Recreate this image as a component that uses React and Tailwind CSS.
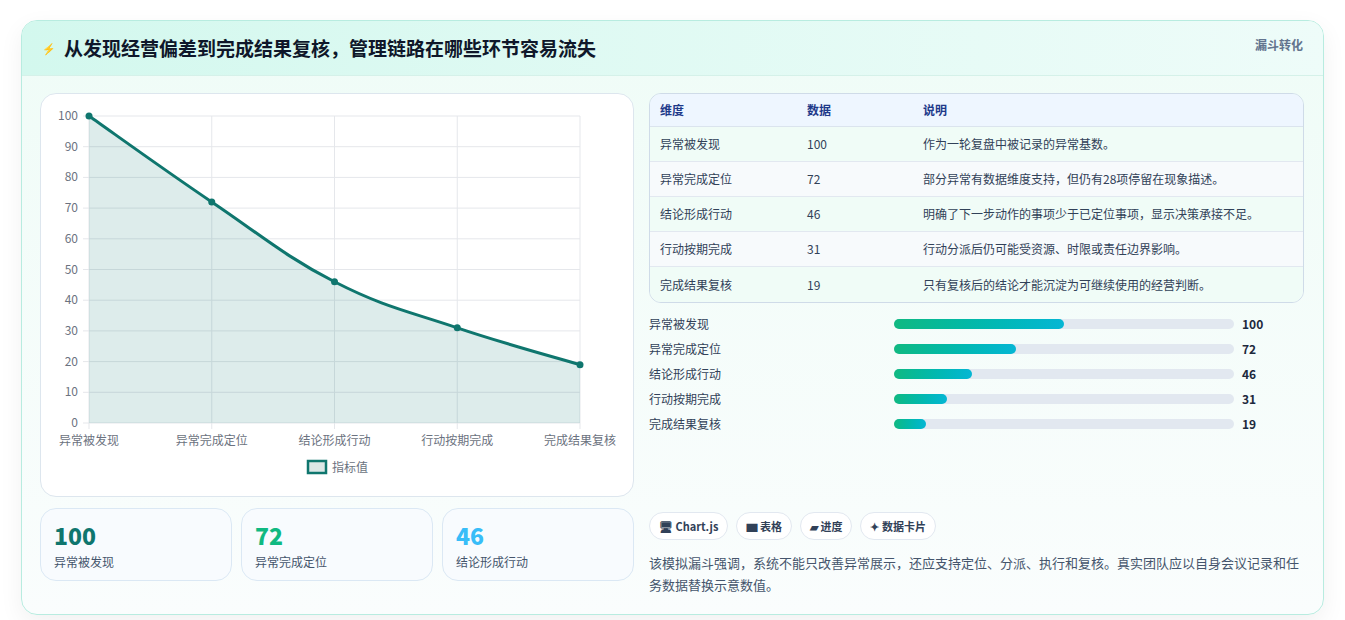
import React from 'react';

const rows = [
  ['异常被发现', 100, '作为一轮复盘中被记录的异常基数。'],
  ['异常完成定位', 72, '部分异常有数据维度支持，但仍有28项停留在现象描述。'],
  ['结论形成行动', 46, '明确了下一步动作的事项少于已定位事项，显示决策承接不足。'],
  ['行动按期完成', 31, '行动分派后仍可能受资源、时限或责任边界影响。'],
  ['完成结果复核', 19, '只有复核后的结论才能沉淀为可继续使用的经营判断。'],
];

const font = { fontFamily: '"Noto Sans CJK SC", "Noto Sans", sans-serif' };

const Chart = () => {
  const x0 = 48, x1 = 539, y0 = 22, y1 = 329;
  const pts = rows.map((r, i) => [x0 + ((x1 - x0) / 4) * i, y1 - ((y1 - y0) * r[1]) / 100]);
  let d = `M${pts[0][0]},${pts[0][1]}`;
  for (let i = 0; i < pts.length - 1; i++) {
    const p0 = pts[i - 1] || pts[i], p1 = pts[i], p2 = pts[i + 1], p3 = pts[i + 2] || p2;
    const t = 0.4 / 2;
    const c1 = [p1[0] + (p2[0] - p0[0]) * t, p1[1] + (p2[1] - p0[1]) * t];
    const c2 = [p2[0] - (p3[0] - p1[0]) * t, p2[1] - (p3[1] - p1[1]) * t];
    d += ` C${c1[0]},${c1[1]} ${c2[0]},${c2[1]} ${p2[0]},${p2[1]}`;
  }
  const area = `${d} L${x1},${y1} L${x0},${y1} Z`;
  return (
    <svg width="593" height="401" style={font}>
      {Array.from({ length: 11 }).map((_, i) => {
        const y = y1 - ((y1 - y0) * i) / 10;
        return (
          <g key={i}>
            <line x1={x0 - 6} x2={x1} y1={y} y2={y} stroke="#e5e7eb" />
            <text x={37} y={y + 4} textAnchor="end" fontSize="12" fill="#6b7280">{i * 10}</text>
          </g>
        );
      })}
      {pts.map((p, i) => (
        <g key={i}>
          <line x1={p[0]} x2={p[0]} y1={y0} y2={y1 + 6} stroke="#e5e7eb" />
          <text x={p[0]} y={351} textAnchor="middle" fontSize="12" fill="#6b7280">{rows[i][0]}</text>
        </g>
      ))}
      <path d={area} fill="rgba(15,118,110,0.14)" />
      <path d={d} fill="none" stroke="#0f766e" strokeWidth="3" />
      {pts.map((p, i) => <circle key={i} cx={p[0]} cy={p[1]} r="3.5" fill="#0f766e" />)}
      <rect x="267" y="367" width="18" height="12" fill="#dbe7e6" stroke="#0f766e" strokeWidth="2.5" />
      <text x="291" y="378" fontSize="12" fill="#6b7280">指标值</text>
    </svg>
  );
};

export default function App() {
  return (
    <div className="min-h-screen bg-white pt-5 px-[21px]" style={font}>
      <div className="rounded-2xl border border-[#b8ece0] bg-gradient-to-b from-[#effcf7] to-[#fafdfd] shadow-[0_8px_24px_rgba(0,0,0,0.06)] overflow-hidden">
        <div className="h-[55px] flex items-center justify-between px-5 bg-gradient-to-r from-[#d3f8ee] to-[#eefcf9] border-b border-[#d5f1e9]">
          <div className="flex items-center gap-2">
            <span className="text-[11px] text-blue-500">⚡</span>
            <h1 className="text-[19px] font-bold text-[#0f172a]">从发现经营偏差到完成结果复核，管理链路在哪些环节容易流失</h1>
          </div>
          <span className="text-xs font-bold text-slate-500 self-start mt-[16px]">漏斗转化</span>
        </div>
        <div className="flex gap-[15px] px-[18px] pt-[17px] pb-[18px]">
          <div className="w-[594px] flex flex-col gap-[11px]">
            <div className="h-[404px] rounded-2xl border border-[#dde6ee] bg-white"><Chart /></div>
            <div className="grid grid-cols-3 gap-[9px]">
              {[['100', 'text-[#0f766e]', '异常被发现'], ['72', 'text-[#10b981]', '异常完成定位'], ['46', 'text-[#38bdf8]', '结论形成行动']].map(([v, c, l]) => (
                <div key={l} className="h-[73px] rounded-2xl border border-[#dbe8f4] bg-[#f8fbfe] px-[13px] pt-[12px]">
                  <div className={`text-[23px] font-extrabold leading-7 ${c}`}>{v}</div>
                  <div className="text-xs text-slate-600 mt-[5px]">{l}</div>
                </div>
              ))}
            </div>
          </div>
          <div className="flex-1 flex flex-col pr-[1px]">
            <div className="rounded-xl border border-[#cfdbe8] overflow-hidden text-xs">
              <div className="flex h-[33px] items-center bg-[#eef6ff] font-bold text-[#1e3a8a] border-b border-[#dbe4ee]">
                <div className="w-[157px] pl-[10px]">维度</div>
                <div className="w-[116px]">数据</div>
                <div>说明</div>
              </div>
              {rows.map((r, i) => (
                <div key={i} className={`flex h-[35px] items-center text-slate-700 ${i < 4 ? 'border-b border-[#e2e8f0]' : ''} ${i % 2 ? 'bg-[#f7fafc]' : 'bg-[#f0fcf7]'}`}>
                  <div className="w-[157px] pl-[10px]">{r[0]}</div>
                  <div className="w-[116px]">{r[1]}</div>
                  <div>{r[2]}</div>
                </div>
              ))}
            </div>
            <div className="flex flex-col gap-[8px] mt-[12px]">
              {rows.map((r) => (
                <div key={r[0]} className="flex items-center h-[17px] text-xs">
                  <div className="w-[245px] text-slate-700">{r[0]}</div>
                  <div className="w-[340px] h-[10px] rounded-full bg-[#e2e8f0]">
                    <div className="h-full rounded-full bg-gradient-to-r from-[#10b981] to-[#06b6d4]" style={{ width: `${r[1] / 2}%` }} />
                  </div>
                  <div className="ml-[8px] font-bold text-slate-800">{r[1]}</div>
                </div>
              ))}
            </div>
            <div className="flex gap-[8px] mt-[80px]">
              {['🖥 Chart.js', '▆ 表格', '▰ 进度', '✦ 数据卡片'].map((t) => (
                <span key={t} className="h-[28px] flex items-center px-[9px] rounded-full border border-[#e2e8f0] bg-white text-[11px] font-bold text-slate-700">{t}</span>
              ))}
            </div>
            <p className="mt-[12px] text-[13px] leading-[22px] text-slate-600">该模拟漏斗强调，系统不能只改善异常展示，还应支持定位、分派、执行和复核。真实团队应以自身会议记录和任务数据替换示意数值。</p>
          </div>
        </div>
      </div>
    </div>
  );
}
